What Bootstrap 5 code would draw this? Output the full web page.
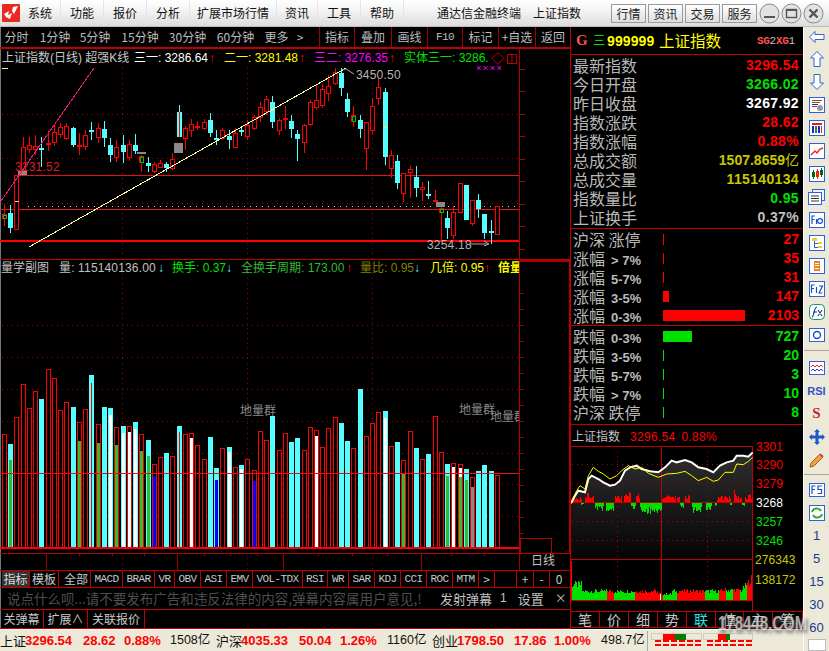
<!DOCTYPE html>
<html lang="zh">
<head>
<meta charset="utf-8">
<title>通达信金融终端</title>
<link href="https://cdn.jsdelivr.net/npm/bootstrap@5.3.0/dist/css/bootstrap.min.css" rel="stylesheet">
<style>
html,body{margin:0;width:829px;height:651px;overflow:hidden;background:#000}
body{font:12px/1.2 "Noto Sans CJK SC","Liberation Sans",sans-serif;color:#c0c0c0}
.num{font-family:"Liberation Sans","Noto Sans CJK SC",sans-serif}
.mono{font:11px "Liberation Mono",monospace;letter-spacing:-.6px;font-weight:700}
.titlebar{height:27px;background:linear-gradient(#fff 0,#f2f2f2 45%,#dcdcdc 100%);color:#111;font-size:12px;border-bottom:1px solid #bbb}
.logo-box{width:18px;height:18px;margin:4px 0 0 2px;flex:none}
.menu-strip{display:grid;grid-template-columns:41px 43px 43px 43px 87px 41px 43px 43px;height:26px;align-items:center;flex:none}
.menu-strip span{text-align:center;white-space:nowrap;border-right:1px solid #e4e4e4;line-height:26px}
.app-name{margin-left:33px;white-space:nowrap}
.app-name b{font-weight:400;margin-left:12px}
.win-btn{width:35px;height:19px;margin:4px 2px 0 0;border:1px solid #9a9a9a;background:linear-gradient(#fff,#dedede);font-size:12px;line-height:17px;text-align:center;color:#222;flex:none}
.win-round{width:21px;height:21px;margin:3px 1px 0 0;flex:none}
.left-col{width:570px;flex:none}
.tool-strip{height:22px;display:grid;grid-template-columns:33px 44px 36px 54px 41px 55px 27px 20px 9px 35px 37px 36px 35px 36px 37px 35px;align-items:stretch;border-bottom:2px solid #c00000;background:#000;color:#bdbdbd;box-shadow:inset 1px 0 #777}
.tool-strip span{text-align:center;line-height:20px;white-space:nowrap}
.tool-strip .cut{border-left:1px solid #a00000}
.tool-strip .mono{line-height:20px;color:#bdbdbd;font-weight:400}
.chart-svg{display:block}
.tab-strip{height:18px;display:grid;grid-template-columns:2px 28px 29px 3px 29px 32px 32px 20px 26px 26px 26px 50px 25px 21px 26px 26px 26px 26px 26px 16px 22px 17px 16px 18px;border-top:1px solid #c00000;border-bottom:1px solid #c00000;background:#000;box-shadow:inset 1px 0 #777}
.tab-strip span{border-right:1px solid #c00000;text-align:center;line-height:16px;color:#c8c8c8;white-space:nowrap;overflow:hidden}
.tab-strip .mono{line-height:16px;color:#c8c8c8;font-weight:400}
.tab-strip .on{background:#333;color:#ddd}
.tab-strip .bare{border-right:0}
.chat-strip{height:22px;align-items:center;background:#000;color:#c0c0c0;border-bottom:1px solid #c00000;box-shadow:inset 1px 0 #777;white-space:nowrap}
.chat-tip{color:#4e4e4e;width:440px;padding-left:7px;white-space:nowrap;font-size:13.5px;flex:none}
.chat-btn{font-size:13px}
.chat-gap{margin-left:8px}
.chat-gap2{margin-left:11px}
.link-strip{height:19px;background:#000;border-bottom:1px solid #c00000;color:#c8c8c8;box-shadow:inset 1px 0 #777}
.link-strip span{border-right:1px solid #c00000;line-height:18px;text-align:center}
.l1{width:44px}.l2{width:44px}.l3{width:57px}
.quote-panel{width:233px;flex:none;border-left:1px solid #c00000;background:#000;display:flex;flex-direction:column}
.code-head{height:28px;align-items:center;border-bottom:1px solid #c00000;flex:none}
.code-g{font:700 15px "Liberation Serif",serif;color:#ff5050;margin-left:5px;width:17px}
.code-mark{color:#00e000;width:14px;font-size:12px}
.code-id{font:700 14px "Liberation Sans",sans-serif;color:#ff0;letter-spacing:.1px;width:52px}
.code-name{color:#ff0;font-size:15.5px;letter-spacing:0;white-space:nowrap;width:98px}
.code-sg{font:700 11px "Liberation Mono",monospace;color:#ff5050;letter-spacing:-.3px;white-space:nowrap}
.code-sg i{font-style:normal;color:#c0c0c0;font-weight:400}
.data-rows{padding:1px 4px 1px 2px;border-bottom:1px solid #c00000;flex:none}
.data-row{height:19px;display:flex;justify-content:space-between;align-items:center;font-size:16px;line-height:19px;color:#b8b8b8;white-space:nowrap}
.val{font:700 14px/19px "Liberation Sans","Noto Sans CJK SC",sans-serif}
.val-lg{letter-spacing:.35px}
.c-red{color:#f00}.c-grn{color:#00e000}.c-wht{color:#fff}.c-oli{color:#c8c800}.c-gry{color:#c0c0c0}
.band-rows{padding:1px 4px 0 2px;border-bottom:1px solid #c00000;flex:none}
.band-row{height:19px;display:flex;align-items:center;font-size:16px;line-height:19px;color:#b8b8b8;white-space:nowrap}
.band-name{width:90px;flex:none}
.band-name em{font:700 13px "Liberation Sans",sans-serif;color:#bbb;margin-left:6px}
.band-bar{height:11px;min-width:1px}
.band-thin{height:11px;width:1px}
.band-val{margin-left:auto}
.bg-up{background:#f00}.bg-down{background:#00e000}
.bands-last{padding-bottom:2px}
.mini-title{height:16px;line-height:21px;padding-left:1px;color:#c0c0c0;white-space:nowrap;flex:none}
.mini-title b{font:400 12px "Liberation Sans",sans-serif;color:#f00;letter-spacing:.3px}
.mini-val{margin-left:10px}
.mini-pct{margin-left:6px}
.mini-tabs{display:grid;grid-template-columns:29px 29px 29px 29px 29px 28px 29px 30px;height:17px;border-top:1px solid #c00000;border-bottom:1px solid #c00000;flex:none;position:relative}
.mini-tabs span{text-align:center;border-right:1px solid #c00000;line-height:15px;font-size:14px;color:#c8c8c8}
.mini-tabs .on{color:#2ee6e6}
.stamp{position:absolute;left:147px;top:2px;font:700 15px "Liberation Sans",sans-serif;color:rgba(235,235,235,.7);text-shadow:1px 2px 3px rgba(90,90,90,.9);white-space:nowrap;transform:scaleY(1.4)}
.status-strip{height:22px;background:#ece9d8;color:#111;display:grid;grid-template-columns:25px 58px 41px 46px 46px 25px 58px 41px 47px 45px 25px 57px 40px 47px 46px 157px;align-items:center;border-top:1px solid #fff;white-space:nowrap;font-size:13px}
.status-strip .num{font-size:12.5px}
.status-strip b{font:700 13px "Liberation Sans",sans-serif;color:#f00}
.status-strip svg{display:block;border-left:1px solid #aaa}
.side-rail{width:26px;flex:none;background:#ece9d8;color:#1a3a90;display:flex;flex-direction:column;align-items:center;border-left:1px solid #fff}
.rail-item{height:23px;display:flex;align-items:center;justify-content:center;font:13px "Liberation Sans",sans-serif;width:100%;flex:none}
.rail-first{height:20px}
.rail-cut{border-top:1px solid #a9a79a;width:100%;margin:4px 0 5px;flex:none}
.rail-cut2{border-top:1px solid #a9a79a;width:100%;margin:3px 0 3px;flex:none}
.rail-box{width:18px;height:12px;border:1px solid #bbb;background:#fff;flex:none}
.rsi-mark{font:700 11px "Liberation Sans",sans-serif;color:#3452c8}
.s-mark{font:700 15px "Liberation Serif",serif;color:#c02828}
.win-pad{width:4px;flex:none}
.yi{font-weight:400}
</style>
</head>
<body>
<header class="titlebar d-flex">
  <svg class="logo-box" viewBox="0 0 18 18"><rect width="18" height="18" rx="1" fill="#e82a20"/><path d="M2 10 L7 7 L6 11 L10 9 L8 15 L4 13 Z M11 3 L16 2 L12 10 L10 7 Z" fill="#fff"/></svg>
  <nav class="menu-strip"><span>系统</span><span>功能</span><span>报价</span><span>分析</span><span>扩展市场行情</span><span>资讯</span><span>工具</span><span>帮助</span></nav>
  <div class="app-name align-self-center">通达信金融终端<b>上证指数</b></div>
  <div class="ms-auto d-flex">
    <div class="win-btn">行情</div><div class="win-btn">资讯</div><div class="win-btn">交易</div><div class="win-btn">服务</div>
    <svg class="win-round" viewBox="0 0 21 21"><circle cx="10.5" cy="10.5" r="9.5" fill="#e2e2e2" stroke="#8a8a8a"/><rect x="5" y="13" width="11" height="2" fill="#555"/></svg>
    <svg class="win-round" viewBox="0 0 21 21"><circle cx="10.5" cy="10.5" r="9.5" fill="#e2e2e2" stroke="#8a8a8a"/><rect x="5.5" y="6.5" width="10" height="8" fill="none" stroke="#555" stroke-width="1.4"/><rect x="5" y="6" width="11" height="2" fill="#555"/></svg>
    <svg class="win-round" viewBox="0 0 21 21"><circle cx="10.5" cy="10.5" r="9.5" fill="#e2e2e2" stroke="#8a8a8a"/><path d="M6.5 6.5 L14.5 14.5 M14.5 6.5 L6.5 14.5" stroke="#555" stroke-width="2.4"/></svg>
    <div class="win-pad"></div>
  </div>
</header>

<div class="d-flex" style="height:624px">
  <div class="d-flex flex-column" style="width:803px;flex:none">
    <div class="d-flex" style="height:602px">
      <main class="left-col">
        <div class="tool-strip">
          <span>分时</span><span>1分钟</span><span>5分钟</span><span>15分钟</span><span>30分钟</span><span>60分钟</span><span>更多</span><span>&gt;</span><span></span>
          <span class="cut">指标</span><span class="cut">叠加</span><span class="cut">画线</span><span class="cut mono">F10</span><span class="cut">标记</span><span class="cut">+自选</span><span class="cut">返回</span>
        </div>
        <svg id="kchart" class="chart-svg" width="570" height="521" viewBox="0 49 570 521" font-family="'Liberation Sans','Noto Sans CJK SC',sans-serif" font-size="12">
          <rect x="0" y="49" width="1" height="521" fill="#777"/>
          <g id="grid"></g>
          <g id="vols" shape-rendering="crispEdges"></g>
          <g id="lines" shape-rendering="crispEdges"></g>
          <g id="candles" shape-rendering="crispEdges"></g>
          <polyline points="1,201 94,68" fill="none" stroke="#f0187a" shape-rendering="crispEdges"/>
          <polyline points="29,247 346,68" fill="none" stroke="#ffffa0" shape-rendering="crispEdges"/>
          <rect x="2" y="68" width="6" height="1" fill="#ffff99"/>
          <text x="2" y="62" fill="#c8c8c8">上证指数(日线) 超强K线</text>
          <text x="134" y="62" fill="#fff">三一: 3286.64</text><text x="209" y="62" fill="#f00">↑</text>
          <text x="224" y="62" fill="#ff0">二一: 3281.48</text><text x="299" y="62" fill="#f00">↑</text>
          <text x="314" y="62" fill="#f0f">三二: 3276.35</text><text x="389" y="62" fill="#f00">↑</text>
          <text x="404" y="62" fill="#00e000">实体三一: 3286.</text>
          <text x="491" y="63" fill="#e00000" font-size="13">◇</text>
          <rect x="507.5" y="54.5" width="9" height="9" fill="none" stroke="#c00000"/><line x1="512" x2="512" y1="55" y2="63" stroke="#c00000"/>
          <text x="476" y="71" fill="#f0f" font-size="9" letter-spacing="1.6">××××</text>
          <polyline points="341,70 346,69 354,74" fill="none" stroke="#aaa"/>
          <text x="356" y="79" fill="#b4b4b4" letter-spacing=".2">3450.50</text>
          <text x="15" y="171" fill="#d82020" letter-spacing=".2">3231.52</text>
          <text x="427" y="249" fill="#b4b4b4" letter-spacing=".2">3254.18</text>
          <polyline points="470,244 488,244" fill="none" stroke="#aaa"/><path d="M484 241 L489 244 L484 246" fill="none" stroke="#aaa"/>
          <text x="1" y="272" fill="#c0c0c0">量学副图</text>
          <text x="59" y="272" fill="#c0c0c0" letter-spacing=".15">量: 115140136.00</text><text x="158" y="272" fill="#55ffff">↓</text>
          <text x="172" y="272" fill="#00e000">换手: 0.37</text><text x="226" y="272" fill="#55ffff">↓</text>
          <text x="241" y="272" fill="#33bb33">全换手周期: 173.00</text><text x="346" y="272" fill="#f00">↑</text>
          <text x="360" y="272" fill="#808000">量比: 0.95</text><text x="414" y="272" fill="#55ffff">↓</text>
          <text x="430" y="272" fill="#ff0">几倍: 0.95</text><text x="484" y="272" fill="#f00">↑</text>
          <text x="498" y="272" fill="#ff0" font-weight="700" clip-path="url(#cut519)">倍量</text>
          <clipPath id="cut519"><rect x="0" y="49" width="519" height="521"/></clipPath>
          <text x="240" y="415" fill="#8a8a8a">地量群</text>
          <text x="459" y="414" fill="#8a8a8a">地量群</text>
          <text x="490" y="421" fill="#8a8a8a" clip-path="url(#cut519)">地量群</text>
          <text x="531" y="565" fill="#c0c0c0">日线</text>
        </svg>
        <div class="tab-strip">
          <span class="bare"></span><span class="on">指标</span><span>模板</span><span class="bare"></span><span>全部</span>
          <span class="mono">MACD</span><span class="mono">BRAR</span><span class="mono">VR</span><span class="mono">OBV</span><span class="mono">ASI</span><span class="mono">EMV</span><span class="mono">VOL-TDX</span><span class="mono">RSI</span><span class="mono">WR</span><span class="mono">SAR</span><span class="mono">KDJ</span><span class="mono">CCI</span><span class="mono">ROC</span><span class="mono">MTM</span><span>&gt;</span><span></span><span>+</span><span>-</span><span class="bare">0</span>
        </div>
        <div class="chat-strip d-flex">
          <div class="chat-tip">说点什么呗...请不要发布广告和违反法律的内容,弹幕内容属用户意见,!</div>
          <span class="chat-btn">发射弹幕</span><span class="num chat-gap">1</span><span class="chat-btn chat-gap2">设置</span><span class="chat-gap2">×</span>
        </div>
        <div class="link-strip d-flex">
          <span class="l1">关弹幕</span><span class="l2">扩展∧</span><span class="l3">关联报价</span>
        </div>
      </main>

      <aside class="quote-panel">
        <div class="code-head d-flex">
          <span class="code-g">G</span><span class="code-mark">三</span><span class="code-id">999999</span><span class="code-name">上证指数</span>
          <span class="code-sg">SG<i>2</i>XG<i>1</i></span>
        </div>
        <div class="data-rows">
          <div class="data-row">最新指数<span class="val val-lg c-red">3296.54</span></div>
          <div class="data-row">今日开盘<span class="val val-lg c-grn">3266.02</span></div>
          <div class="data-row">昨日收盘<span class="val val-lg c-wht">3267.92</span></div>
          <div class="data-row">指数涨跌<span class="val val-lg c-red">28.62</span></div>
          <div class="data-row">指数涨幅<span class="val val-lg c-red">0.88%</span></div>
          <div class="data-row">总成交额<span class="val c-oli">1507.8659<span class="yi">亿</span></span></div>
          <div class="data-row">总成交量<span class="val val-lg c-oli">115140134</span></div>
          <div class="data-row">指数量比<span class="val val-lg c-grn">0.95</span></div>
          <div class="data-row">上证换手<span class="val val-lg c-gry">0.37%</span></div>
        </div>
        <div class="band-rows">
          <div class="band-row"><span class="band-name">沪深 涨停</span><span class="band-thin bg-up"></span><span class="band-val val c-red">27</span></div>
          <div class="band-row"><span class="band-name">涨幅<em>&gt; 7%</em></span><span class="band-thin bg-up"></span><span class="band-val val c-red">35</span></div>
          <div class="band-row"><span class="band-name">涨幅<em>5-7%</em></span><span class="band-thin bg-up"></span><span class="band-val val c-red">31</span></div>
          <div class="band-row"><span class="band-name">涨幅<em>3-5%</em></span><span class="band-bar bg-up" style="width:6px"></span><span class="band-val val c-red">147</span></div>
          <div class="band-row"><span class="band-name">涨幅<em>0-3%</em></span><span class="band-bar bg-up" style="width:82px"></span><span class="band-val val c-red">2103</span></div>
        </div>
        <div class="band-rows bands-last">
          <div class="band-row"><span class="band-name">跌幅<em>0-3%</em></span><span class="band-bar bg-down" style="width:29px"></span><span class="band-val val c-grn">727</span></div>
          <div class="band-row"><span class="band-name">跌幅<em>3-5%</em></span><span class="band-thin bg-down"></span><span class="band-val val c-grn">20</span></div>
          <div class="band-row"><span class="band-name">跌幅<em>5-7%</em></span><span class="band-thin bg-down"></span><span class="band-val val c-grn">3</span></div>
          <div class="band-row"><span class="band-name">跌幅<em>&gt; 7%</em></span><span class="band-thin bg-down"></span><span class="band-val val c-grn">10</span></div>
          <div class="band-row"><span class="band-name">沪深 跌停</span><span class="band-thin bg-down"></span><span class="band-val val c-grn">8</span></div>
        </div>
        <div class="mini-title">上证指数<b class="mini-val">3296.54</b><b class="mini-pct">0.88%</b></div>
        <svg id="mini" class="chart-svg flex-none" width="232" height="170" viewBox="571 442 232 170" font-family="'Liberation Sans',sans-serif" font-size="12">
          <defs><linearGradient id="shade" x1="0" y1="0" x2="0" y2="1"><stop offset="0" stop-color="#2e2e2e"/><stop offset="1" stop-color="#050505"/></linearGradient></defs>
          <g id="miniBack"></g>
          <g id="miniBars" shape-rendering="crispEdges"></g>
          <g id="miniLines"></g>
          <g letter-spacing=".1">
          <text x="756" y="452" fill="#f00">3301</text><text x="756" y="470" fill="#f00">3290</text><text x="756" y="489" fill="#f00">3279</text>
          <text x="756" y="508" fill="#fff">3268</text><text x="756" y="527" fill="#00e000">3257</text><text x="756" y="546" fill="#00e000">3246</text>
          <text x="755" y="565" fill="#c8c800">276343</text><text x="755" y="585" fill="#c8c800">138172</text>
          </g>
        </svg>
        <div class="mini-tabs"><span>笔</span><span>价</span><span>细</span><span>势</span><span class="on">联</span><span>值</span><span>主</span><span>筹</span><div class="stamp">178448.COM</div></div>
      </aside>
    </div>
    <footer class="status-strip">
      <span>上证</span><b>3296.54</b><b>28.62</b><b>0.88%</b><span class="num">1508亿</span>
      <span>沪深</span><b>4035.33</b><b>50.04</b><b>1.26%</b><span class="num">1160亿</span>
      <span>创业</span><b>1798.50</b><b>17.86</b><b>1.00%</b><span class="num">498.7亿</span>
      <svg width="157" height="20" viewBox="646 631 157 20" shape-rendering="crispEdges">
        <g fill="none" stroke="#cfcdbf"><rect x="649.5" y="633.5" width="50" height="6"/><rect x="701.5" y="633.5" width="50" height="6"/></g>
        <rect x="661" y="634" width="12" height="6" fill="#f00"/><rect x="673" y="634" width="11" height="6" fill="#008000"/>
        <rect x="716" y="634" width="9" height="6" fill="#f00"/><rect x="725" y="634" width="4" height="6" fill="#008000"/>
        <g id="dashes" fill="#f00"></g>
      </svg>
    </footer>
  </div>

  <nav class="side-rail">
    <div class="rail-item rail-first"><svg width="16" height="12" viewBox="0 0 16 12"><path d="M6 .5 L.5 6 L6 11.5 V8.5 H15 V3.5 H6 Z" fill="#fff" stroke="#2e62d8"/></svg></div>
    <div class="rail-item"><svg width="14" height="16" viewBox="0 0 14 16"><path d="M7 .5 L13.5 7 H10 V15.5 H4 V7 H.5 Z" fill="#fff" stroke="#2e62d8"/></svg></div>
    <div class="rail-item"><svg width="14" height="16" viewBox="0 0 14 16"><path d="M7 15.5 L13.5 9 H10 V.5 H4 V9 H.5 Z" fill="#fff" stroke="#2e62d8"/></svg></div>
    <div class="rail-item"><svg width="16" height="16" viewBox="0 0 16 16"><rect x=".5" y=".5" width="15" height="15" fill="#fff" stroke="#2e62d8"/><g shape-rendering="crispEdges"><rect x="3" y="3" width="10" height="1" fill="#d22"/><rect x="3" y="5" width="8" height="1" fill="#282"/><rect x="3" y="7" width="6" height="1" fill="#22c"/><rect x="3" y="9" width="5" height="1" fill="#d22"/></g><circle cx="11" cy="11" r="3" fill="#999"/></svg></div>
    <div class="rail-item"><svg width="16" height="16" viewBox="0 0 16 16" shape-rendering="crispEdges"><rect x=".5" y=".5" width="15" height="15" fill="#fff" stroke="#2e62d8"/><rect x="3" y="3" width="10" height="2" fill="#d22"/><rect x="3" y="6" width="2" height="7" fill="#22c"/><rect x="6" y="6" width="2" height="7" fill="#282"/><rect x="9" y="6" width="2" height="7" fill="#22c"/><rect x="12" y="6" width="1" height="7" fill="#d22"/></svg></div>
    <div class="rail-item"><svg width="16" height="16" viewBox="0 0 16 16"><rect x=".5" y=".5" width="15" height="15" fill="#fff" stroke="#2e62d8"/><path d="M2 12 L6 8 L8 10 L11 6 L14 5" fill="none" stroke="#e22" stroke-width="1.4"/></svg></div>
    <div class="rail-item"><svg width="16" height="16" viewBox="0 0 16 16" shape-rendering="crispEdges"><rect x=".5" y=".5" width="15" height="15" fill="#fff" stroke="#2e62d8"/><rect x="3" y="6" width="3" height="5" fill="#060"/><rect x="4" y="4" width="1" height="9" fill="#060"/><rect x="7" y="5" width="3" height="6" fill="#e22"/><rect x="8" y="3" width="1" height="10" fill="#e22"/><rect x="11" y="4" width="3" height="5" fill="#060"/><rect x="12" y="2" width="1" height="9" fill="#060"/></svg></div>
    <div class="rail-item"><svg width="17" height="16" viewBox="0 0 17 16"><rect x="4.5" y=".5" width="12" height="11" fill="#f3f3f3" stroke="#2e62d8"/><rect x=".5" y="3.5" width="13" height="12" fill="#fff" stroke="#2e62d8"/><path d="M3 7 H11 M3 9.5 H11 M3 12 H11" stroke="#333"/></svg></div>
    <div class="rail-item"><svg width="16" height="16" viewBox="0 0 16 16"><rect x=".5" y=".5" width="15" height="15" fill="#fff" stroke="#2e62d8"/><path d="M3 12 V4 H6 M3 7.5 H5.5 M7.5 7 V12" stroke="#1a4fc8" fill="none" stroke-width="1.2"/><circle cx="11" cy="9" r="2.4" fill="none" stroke="#1a4fc8" stroke-width="1.2"/></svg></div>
    <div class="rail-item"><svg width="16" height="16" viewBox="0 0 16 16" shape-rendering="crispEdges"><rect x=".5" y=".5" width="15" height="15" fill="#fff" stroke="#2e62d8"/><rect x="3" y="3" width="5" height="3" fill="#f0c840"/><rect x="9" y="7" width="4" height="2" fill="#f0c840"/><rect x="9" y="11" width="4" height="2" fill="#f0c840"/><path d="M5 6 V12 H9 M5 8 H9" fill="none" stroke="#2e62d8"/></svg></div>
    <div class="rail-item"><svg width="16" height="16" viewBox="0 0 16 16" shape-rendering="crispEdges"><rect x=".5" y=".5" width="15" height="15" fill="#fff" stroke="#2e62d8"/><rect x="5" y="3" width="6" height="10" fill="#f08020"/><path d="M6 5 H10 M6 7.5 H10 M6 10 H10" stroke="#fff"/></svg></div>
    <div class="rail-item"><svg width="16" height="16" viewBox="0 0 16 16"><rect x=".5" y=".5" width="15" height="15" fill="#fff" stroke="#2e62d8"/><path d="M2.5 12 V4 H5.5 M2.5 7.5 H5 M7.5 6 V12 M10 5 H13.5 L10 12 H13.5" fill="none" stroke="#1a4fc8" stroke-width="1.2"/></svg></div>
    <div class="rail-item"><svg width="16" height="16" viewBox="0 0 16 16"><rect x=".5" y=".5" width="15" height="15" rx="4" fill="#fff" stroke="#1f8f70"/><path d="M3 13 C5 13 5 3 8 3 M4 8 H8 M9 6 L13 12 M13 6 L9 12" fill="none" stroke="#123a90" stroke-width="1.1"/></svg></div>
    <div class="rail-item"><svg width="16" height="14" viewBox="0 0 16 14"><rect x=".5" y=".5" width="15" height="13" fill="#fff" stroke="#2e62d8"/><circle cx="8" cy="7" r="3.5" fill="none" stroke="#1a4fc8" stroke-width="1.4"/></svg></div>
    <div class="rail-cut"></div>
    <div class="rail-item"><svg width="16" height="14" viewBox="0 0 16 14"><rect x=".5" y=".5" width="15" height="13" fill="#fff" stroke="#2e62d8"/><path d="M2 6 L4 4 L6 6 L8 4 L10 6 L12 4 L14 6" fill="none" stroke="#e22"/><path d="M2 10 L4 8 L6 10 L8 8 L10 10 L12 8 L14 10" fill="none" stroke="#33c"/></svg></div>
    <div class="rail-item"><span class="rsi-mark">RSI</span></div>
    <div class="rail-item"><span class="s-mark">S</span></div>
    <div class="rail-item"><svg width="16" height="16" viewBox="0 0 16 16"><path d="M8 0 L11 3 H9.5 V6.5 H13 V5 L16 8 L13 11 V9.5 H9.5 V13 H11 L8 16 L5 13 H6.5 V9.5 H3 V11 L0 8 L3 5 V6.5 H6.5 V3 H5 Z" fill="#1c5ac8"/></svg></div>
    <div class="rail-item"><svg width="16" height="16" viewBox="0 0 16 16"><path d="M2 11 L11 2 L14 5 L5 14 L1 15 Z" fill="#f0a040" stroke="#a06020"/><path d="M11 2 L14 5" stroke="#e04040" stroke-width="2"/></svg></div>
    <div class="rail-cut2"></div>
    <div class="rail-item"><svg width="16" height="14" viewBox="0 0 16 14"><rect x=".5" y=".5" width="15" height="13" fill="#fff" stroke="#2e62d8"/><path d="M3 11 V3 H6.5 M3 6.5 H6 M13 3 H9 V6.5 H12.5 V10.5 H8.5" fill="none" stroke="#1a4fc8" stroke-width="1.2"/></svg></div>
    <div class="rail-item"><svg width="16" height="16" viewBox="0 0 16 16"><rect x=".5" y=".5" width="15" height="15" fill="#fff" stroke="#2e62d8"/><path d="M3 7 C4 3 10 2 12 6 M13 9 C12 13 6 14 4 10" fill="none" stroke="#3ca83c" stroke-width="2"/></svg></div>
    <div class="rail-item">1</div><div class="rail-item">5</div><div class="rail-item">15</div><div class="rail-item">30</div><div class="rail-item">60</div>
    <div class="rail-box"></div>
  </nav>
</div>

<script>
const NS='http://www.w3.org/2000/svg';
function el(p,t,a){const e=document.createElementNS(NS,t);for(const k in a)e.setAttribute(k,a[k]);document.getElementById(p).appendChild(e);return e}
const R='#ff0000',C='#55ffff',X=i=>Math.round(2+6.24*i);
/* grid */
[114,158,203,325,357,389,421,453,484,516].forEach(y=>el('grid','line',{x1:2,x2:519,y1:y+.5,y2:y+.5,stroke:'#a00000','stroke-dasharray':'1 4'}));
[122,247,372].forEach(x=>el('grid','line',{x1:x+.5,x2:x+.5,y1:68,y2:570,stroke:'#a00000','stroke-dasharray':'1 4'}));
el('grid','line',{x1:28,x2:519,y1:206.5,y2:206.5,stroke:'#ffb0b0','stroke-dasharray':'1 5'});
/* volume bars: [kind, top(zoom y), innerColour, innerTop] */
const G='#33bb33',W='#fff',B='#0000ff';
const V=[['r',223],['c',252,G,300],['r',172],['r',73],['r',145],['r',94],['c',117],['r',28],['r',55],['r',151],['r',127],['c',141],['r',187,G,243],['r',148],['c',45,R,69],['r',193,G,249],['c',141],['c',144,W,165],['r',202,G,255],['c',198,W,219],['r',199,W,216],['c',186,W,207],['r',223,G,273],['c',240,G,288],['r',313,B,348],['r',292],['c',279],['r',289],['c',198,R,216],['r',223],['r',220,W,234],['r',256],['r',298],['c',231],['c',324,B,360],['r',265],['c',262,W,276],['r',322],['c',316,W,327],['r',298],['r',331,B,363],['r',214],['r',241],['c',168],['r',271],['r',220],['c',246],['c',234],['r',271],['r',202],['r',211,W,228],['r',262],['r',205],['r',172],['c',189],['c',243],['r',265],['c',87],['r',229],['r',190],['r',157],['c',153,W,174],['r',259],['c',246],['r',301,G,342],['r',214],['c',265],['r',298],['c',282],['r',169],['r',277],['c',313,G,348],['r',310,W,321],['r',313,G,351],['c',327,G,360],['r',352,'#888',381],['c',334],['c',316],['c',334],['r',346]];
V.forEach((v,i)=>{const x=X(i),t=Math.round(360+v[1]/3),b=548;
 if(v[0]=='c')el('vols','rect',{x:x,y:t,width:5,height:b-t,fill:C});
 else el('vols','rect',{x:x+.5,y:t+.5,width:4,height:b-t,fill:'#000',stroke:R});
 if(v[2]){const t2=Math.round(360+v[3]/3);const w=v[2]==R?1:3;el('vols','rect',{x:x+(5-w)/2|0,y:t2,width:w,height:b-t2,fill:v[2]})}
 if(i==73){const t2=Math.round(360+324/3);el('vols','rect',{x:x+1,y:t2,width:3,height:9,fill:W})}
});
/* lines */
const H=(y,x1,x2,c,w)=>el('lines','rect',{x:x1,y:y,width:x2-x1,height:w||1,fill:c});
H(175,14,519,'#e81010');H(209,0,519,'#e01818');H(240,0,519,R,2);
H(259,0,570,'#c00000');H(473,0,519,'#e81010');H(547,0,519,R,2);H(553,0,570,'#b00000');
H(260,520,570,'#b00000',2);
el('lines','rect',{x:519,y:49,width:1,height:521,fill:'#b00000'});
el('lines','rect',{x:569,y:260,width:1,height:293,fill:'#b00000'});
el('lines','rect',{x:520.5,y:538.5,width:31,height:15,fill:'none',stroke:'#b00000'});
for(let y=69;y<250;y+=22.45)H(Math.round(y),520,525,'#b00000');
for(let y=293;y<548;y+=16)H(y,520,524,'#a00000');
[46,177,283,421,519].forEach(x=>el('lines','rect',{x:x,y:553,width:1,height:17,fill:'#a00000'}));
[79,112,144,204,230,257,318,352,387,451,484].forEach(x=>el('lines','rect',{x:x,y:553,width:1,height:3,fill:'#a00000'}));
/* candles: [kind, high, low, top, bottom, flag] */
const K=[['r',204,226,214,218,'g'],['c',205,233,213,228],['r',175,229,175,229,'y'],['r',137,175,147,173],['r',137,153,145,149],['r',135,155,146,149],['c',137,167,148,148],['r',130,151,143,145,'s'],['r',125,146,132,142],['r',123,138,127,134],['r',123,140,126,138],['c',127,147,128,145],['r',133,155,145,147,'s'],['r',130,150,135,146],['c',122,140,130,132],['r',123,143,128,137],['c',121,147,129,138],['c',138,162,145,155],['r',140,162,147,157],['c',135,163,145,152],['r',140,161,144,157],['c',134,154,145,151],['r',155,172,156,162,'g'],['c',157,172,163,166],['r',162,173,164,171],['r',160,168,163,167],['c',162,172,164,168],['r',153,170,159,168],['c',105,137,112,137,'ri'],['r',126,150,128,138],['r',119,137,124,130],['r',121,130,126,128,'s'],['r',119,130,122,128],['c',113,137,120,133],['c',130,145,138,138],['r',128,140,130,138],['c',130,149,136,140],['r',128,148,133,147],['c',128,136,130,130],['r',120,140,125,136],['r',115,130,117,128],['r',102,122,107,117],['r',96,115,99,111],['c',96,128,102,122],['r',118,135,120,130],['r',106,129,118,120,'s'],['c',115,138,121,129],['c',130,161,134,139],['r',124,153,125,142],['r',100,126,102,124],['r',85,110,100,107],['r',84,108,89,105],['r',75,101,86,93],['r',68,85,72,83],['c',68,96,73,88],['c',93,117,99,112],['r',106,127,115,121,'g'],['c',115,138,120,129],['r',122,170,122,148],['r',98,135,106,130],['r',78,105,87,98],['c',88,165,92,157,'y2'],['r',150,178,155,168],['c',155,189,161,183],['r',173,202,173,193],['r',166,198,169,172],['c',166,197,177,188],['r',182,201,187,189],['c',181,199,194,194],['r',190,202,200,201,'s'],['r',207,242,208,212,'g'],['c',211,239,218,228],['r',206,239,212,235],['r',183,213,183,212],['c',185,220,185,220],['r',200,226,200,223],['c',194,218,200,209],['c',214,239,214,233],['c',220,244,231,231],['r',206,234,206,234]];
K.forEach((k,i)=>{const x=X(i),col=k[0]=='r'?R:C,mx=x+2;
 el('candles','rect',{x:mx,y:k[1],width:1,height:k[2]-k[1],fill:col});
 const t=k[3],b=k[4];
 if(k[5]=='s'||b-t<=1&&k[0]=='c'){el('candles','rect',{x:x,y:t,width:5,height:Math.max(2,b-t),fill:col});return}
 if(k[0]=='c')el('candles','rect',{x:x,y:t,width:5,height:b-t,fill:C});
 else el('candles','rect',{x:x+.5,y:t+.5,width:4,height:b-t,fill:'#000',stroke:R});
 if(k[5]=='g')el('candles','rect',{x:x+1,y:t+1,width:3,height:b-t-1,fill:'none',stroke:'#00c000'});
 if(k[5]=='y')el('candles','rect',{x:x+1,y:201,width:4,height:1,fill:'#ffe040'});
 if(k[5]=='y2')el('candles','rect',{x:x,y:127,width:5,height:1,fill:'#ffe040'});
 if(k[5]=='ri')el('candles','rect',{x:mx,y:t,width:1,height:b-t,fill:R});
});
[[137,152,9,2],[174,143,9,10],[18,171,9,4],[436,202,9,5]].forEach(b=>el('candles','rect',{x:b[0],y:b[1],width:b[2],height:b[3],fill:'#8a8a8a'}));
/* mini chart */
const Z=(x,y)=>[570+x/3,425+y/3];
const white=[[3,238],[15,215],[25,200],[45,205],[55,165],[65,155],[85,165],[100,175],[120,185],[135,182],[150,170],[165,140],[180,130],[200,125],[215,135],[240,142],[265,145],[285,130],[305,110],[320,115],[345,108],[365,115],[385,130],[410,135],[430,145],[450,125],[470,115],[490,110],[500,95],[520,95],[535,98],[548,85]].map(p=>Z(p[0],p[1]));
const yellow=[[3,235],[20,200],[30,185],[45,195],[55,155],[70,130],[85,142],[100,150],[120,165],[140,155],[155,140],[175,125],[195,135],[215,130],[235,148],[265,160],[290,150],[320,148],[345,142],[365,155],[385,170],[410,160],[430,172],[445,168],[465,145],[490,145],[500,120],[520,122],[535,112],[548,100]].map(p=>Z(p[0],p[1]));
const pts=a=>a.map(p=>p[0]+','+p[1]).join(' ');
el('miniBack','polygon',{points:pts(white)+' 753,560 571,560',fill:'url(#shade)'});
[465,484,522,541].forEach(y=>el('miniBack','line',{x1:572,x2:753,y1:y+.5,y2:y+.5,stroke:'#b00000','stroke-dasharray':'1 4'}));
[617,707].forEach(x=>el('miniBack','line',{x1:x+.5,x2:x+.5,y1:447,y2:601,stroke:'#b00000','stroke-dasharray':'1 4'}));
[[661,447,1,154],[752,447,1,165],[571,447,182,1],[571,503,182,1],[571,560,182,1],[571,601,182,1]].forEach(r=>el('miniBack','rect',{x:r[0],y:r[1],width:r[2],height:r[3],fill:'#c00000','shape-rendering':'crispEdges'}));
const rnd=i=>{const s=Math.sin(i*12.9898)*43758.5453;return s-Math.floor(s)};
/* order-flow bars, zoom x ranges: [from,to,peak,sign] */
[[5,35,15,1],[45,70,30,1],[135,155,20,1],[160,180,30,1],[197,207,25,1],[275,315,20,1],[320,328,15,1],[345,358,22,1],[440,480,20,1],[492,497,50,1],[497,515,18,1],[525,548,25,1],
 [33,40,8,-1],[75,100,25,-1],[108,130,25,-1],[182,195,20,-1],[210,275,35,-1],[330,340,15,-1],[365,395,30,-1],[408,425,25,-1],[435,440,12,-1],[480,484,10,-1],[515,522,12,-1]].forEach((s,n)=>{
 for(let x=Math.ceil(s[0]/3);x<=s[1]/3;x++){const h=Math.max(1,Math.round((.3+.7*rnd(x*3+n))*s[2]/3));
  el('miniBars','rect',{x:570+x,y:s[3]>0?503-h:504,width:1,height:h,fill:s[3]>0?'#f00':'#00e000'})}
});
for(let x=572;x<752;x++){const i=x-572,edge=i<10?16:(i>168?8+(i-168)*1.2:(i>85&&i<100?6:(i>150?10:9)));
 const h=Math.round(edge*(.75+.45*rnd(i+7)));const run=Math.floor(i/7);
 el('miniBars','rect',{x:x,y:601-h,width:1,height:h,fill:rnd(run*5+1)>.5?'#00e000':'#f00'})}
el('miniBars','rect',{x:571,y:562,width:1,height:39,fill:'#f00'});
el('miniBars','rect',{x:660,y:595,width:1,height:6,fill:'#fff'});
el('miniLines','polyline',{points:pts(white),fill:'none',stroke:'#fff','stroke-width':2});
el('miniLines','polyline',{points:pts(yellow),fill:'none',stroke:'#ff0','stroke-width':1});
/* status dashes */
[640,644].forEach(y=>{for(let n=0;n<6;n++){el('dashes','rect',{x:653+n*8,y:y,width:6,height:2});el('dashes','rect',{x:705+n*8,y:y,width:6,height:2})}});
</script>
<script src="https://cdn.jsdelivr.net/npm/bootstrap@5.3.0/dist/js/bootstrap.bundle.min.js"></script>
</body>
</html>
